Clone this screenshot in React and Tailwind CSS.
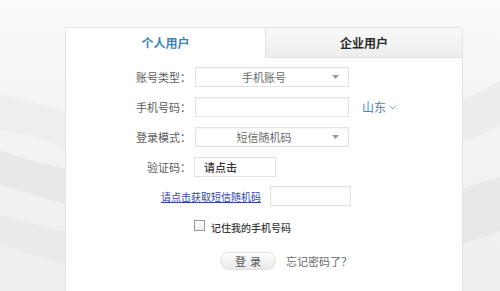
const FONT = { fontFamily: '"Noto Sans CJK SC", "Noto Sans", sans-serif' };

function Caret() {
  return (
    <svg width="7" height="4" viewBox="0 0 7 4" className="shrink-0">
      <path d="M0 0h7L3.5 4z" fill="#9a9a9a" />
    </svg>
  );
}

function Label({ children }) {
  return <span className="w-[127px] shrink-0 pr-[2px] text-right text-[11px] text-[#5c5c5c]">{children}</span>;
}

function Select({ value }) {
  return (
    <div className="ml-[2px] flex h-[20px] w-[154px] items-center border border-[#e2e2e2] bg-white pr-[9px] shadow-[inset_0_1px_2px_rgba(0,0,0,0.05)]">
      <span className="flex-1 text-center text-[11px] text-[#6a6a6a]">{value}</span>
      <Caret />
    </div>
  );
}

function Backdrop() {
  return (
    <svg className="absolute inset-0" width="500" height="291" viewBox="0 0 500 291">
      <defs>
        <linearGradient id="bg" x1="0" y1="0" x2="0" y2="1">
          <stop offset="0" stopColor="#fbfbfb" />
          <stop offset="0.35" stopColor="#f4f4f4" />
          <stop offset="1" stopColor="#eeeeee" />
        </linearGradient>
      </defs>
      <rect width="500" height="291" fill="url(#bg)" />
      <path d="M0 95 C30 100 50 108 70 112 L70 150 C45 140 20 132 0 130z" fill="#ebebeb" opacity="0.7" />
      <path d="M0 150 C25 160 50 165 70 170 L70 205 C40 198 20 190 0 185z" fill="#e6e6e6" opacity="0.7" />
      <path d="M0 215 C25 222 50 228 70 232 L70 265 C40 258 20 250 0 245z" fill="#e8e8e8" opacity="0.7" />
      <path d="M460 100 C475 95 490 88 500 80 L500 125 C490 130 475 138 460 142z" fill="#eaeaea" opacity="0.7" />
      <path d="M460 190 C475 185 490 180 500 176 L500 230 C490 235 475 240 460 244z" fill="#e4e4e4" opacity="0.7" />
    </svg>
  );
}

export default function App() {
  return (
    <div className="relative h-[291px] w-[500px] overflow-hidden" style={FONT}>
      <Backdrop />
      <div className="relative pt-[27px]">
        <div className="ml-[65px] h-[280px] w-[398px] rounded-t-[3px] border border-[#e4e4e4] bg-white">
          <div className="flex h-[30px]">
            <div className="flex w-[199px] items-center justify-center text-[12px] font-bold text-[#3a86b8]">个人用户</div>
            <div className="flex flex-1 items-center justify-center border-b border-l border-[#e2e2e2] bg-gradient-to-b from-[#fafafa] to-[#ececec] text-[12px] font-bold text-[#2a2a2a]">
              企业用户
            </div>
          </div>

          <div className="mt-[9px] flex items-center">
            <Label>账号类型：</Label>
            <Select value="手机账号" />
          </div>

          <div className="mt-[10px] flex items-center">
            <Label>手机号码：</Label>
            <div className="ml-[2px] h-[20px] w-[154px] border border-[#e2e2e2] bg-white shadow-[inset_0_1px_2px_rgba(0,0,0,0.05)]" />
            <span className="ml-[13px] flex items-center gap-[3px] text-[12px] text-[#3a8fd0]">
              山东
              <svg width="8" height="5" viewBox="0 0 8 5">
                <path d="M0.5 0.5L4 4L7.5 0.5" fill="none" stroke="#7ab0dc" strokeWidth="1" />
              </svg>
            </span>
          </div>

          <div className="mt-[10px] flex items-center">
            <Label>登录模式：</Label>
            <Select value="短信随机码" />
          </div>

          <div className="mt-[10px] flex items-center">
            <Label>验证码：</Label>
            <div className="ml-[1px] flex h-[20px] w-[82px] items-center border border-[#e2e2e2] bg-white pl-[9px] text-[11px] font-medium text-[#333]">
              请点击
            </div>
          </div>

          <div className="mt-[9px] flex items-center">
            <span className="ml-[95px] text-[10px] text-[#3046b0] underline">请点击获取短信随机码</span>
            <div className="ml-[9px] h-[20px] w-[81px] border border-[#e2e2e2] bg-white shadow-[inset_0_1px_2px_rgba(0,0,0,0.05)]" />
          </div>

          <div className="mt-[10px] flex items-center">
            <span className="ml-[128px] h-[11px] w-[11px] border border-[#999] bg-gradient-to-b from-white to-[#eee]" />
            <span className="ml-[6px] mt-[4px] text-[10px] font-medium text-[#3a3a3a]">记住我的手机号码</span>
          </div>

          <div className="mt-[17px] flex items-center">
            <span className="ml-[154px] flex h-[18px] w-[56px] items-center justify-center rounded-full border border-[#e2e2e2] bg-gradient-to-b from-white to-[#e8e8e8] pl-[4px] text-[11px] tracking-[4px] text-[#555]">
              登录
            </span>
            <span className="ml-[10px] text-[11px] text-[#6a6a6a]">忘记密码了？</span>
          </div>
        </div>
      </div>
    </div>
  );
}
